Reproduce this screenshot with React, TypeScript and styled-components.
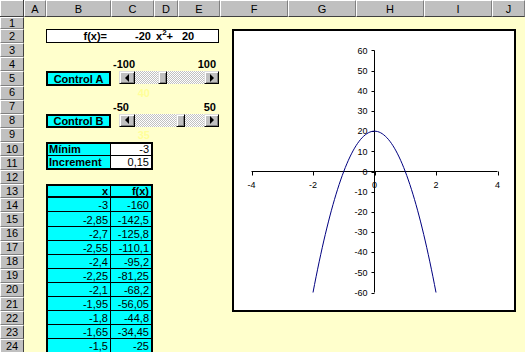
import { Fragment } from 'react'
import styled, { createGlobalStyle } from 'styled-components'

const GlobalStyle = createGlobalStyle`
  *, *::before, *::after { box-sizing: border-box; }
  html, body { margin: 0; padding: 0; background: #ffffcc; }
  body { font-family: "Liberation Sans", Arial, sans-serif; }
`

const COLS = ['A', 'B', 'C', 'D', 'E', 'F', 'G', 'H', 'I', 'J']
const COL_WIDTHS = [22, 65, 43, 24, 42, 68, 68, 68, 68, 33]
const ROW_COUNT = 24

const TABLE: [string, string][] = [
  ['-3', '-160'],
  ['-2,85', '-142,5'],
  ['-2,7', '-125,8'],
  ['-2,55', '-110,1'],
  ['-2,4', '-95,2'],
  ['-2,25', '-81,25'],
  ['-2,1', '-68,2'],
  ['-1,95', '-56,05'],
  ['-1,8', '-44,8'],
  ['-1,65', '-34,45'],
  ['-1,5', '-25'],
]

const Sheet = styled.div`
  display: grid;
  grid-template-columns: 24px ${COL_WIDTHS.map((w) => `${w}px`).join(' ')};
  grid-template-rows: 17px 12px 14.3px repeat(22, 14.1px);
  width: 525px;
  height: 352px;
  overflow: hidden;
  background: #ffffcc;
  font-family: "Liberation Sans", Arial, sans-serif;
  font-size: 11px;
  color: #000;
`

const Corner = styled.div`
  grid-column: 1;
  grid-row: 1;
  background: #c0c0c0;
  border-right: 1px solid #404040;
  border-bottom: 1px solid #404040;
  box-shadow: inset 1px 1px #fff;
`

const ColHead = styled.div<{ $col: number }>`
  grid-row: 1;
  grid-column: ${(p) => p.$col};
  display: flex;
  align-items: center;
  justify-content: center;
  background: #c0c0c0;
  border-left: 1px solid #fff;
  border-right: 1px solid #808080;
  border-bottom: 1px solid #404040;
  border-top: 1px solid #fff;
`

const RowHead = styled.div<{ $row: number }>`
  grid-column: 1;
  grid-row: ${(p) => p.$row};
  display: flex;
  align-items: center;
  justify-content: center;
  background: #c0c0c0;
  border-top: 1px solid #fff;
  border-left: 1px solid #fff;
  border-bottom: 1px solid #808080;
  border-right: 1px solid #404040;
  line-height: 1;
`

const FormulaBox = styled.div`
  grid-column: 3 / 7;
  grid-row: 3;
  display: flex;
  align-items: flex-end;
  background: #fff;
  border: 1px solid #000;
  margin-right: 1px;
  font-weight: 700;
  line-height: 12px;
`

const Part = styled.span<{ $w?: number; $align?: 'left' | 'right'; $pad: number }>`
  flex: ${(p) => (p.$w ? `0 0 ${p.$w}px` : '1')};
  text-align: ${(p) => p.$align ?? 'left'};
  padding-${(p) => p.$align ?? 'left'}: ${(p) => p.$pad}px;
  white-space: nowrap;

  sup {
    font-size: 8px;
    line-height: 0;
    vertical-align: 5px;
  }
`

const RangeLabels = styled.div<{ $row: number }>`
  grid-column: 4 / 7;
  grid-row: ${(p) => p.$row};
  display: flex;
  justify-content: space-between;
  align-items: flex-end;
  padding: 0 4px 1px 2px;
  font-weight: 700;
  line-height: 12px;
`

const ControlLabel = styled.div<{ $row: number }>`
  grid-column: 3;
  grid-row: ${(p) => p.$row};
  display: flex;
  align-items: center;
  justify-content: center;
  background: #00ffff;
  border: 2px solid #000;
  font-weight: 700;
`

const ScrollBar = styled.div<{ $row: number }>`
  grid-column: 4 / 7;
  grid-row: ${(p) => p.$row};
  align-self: start;
  display: flex;
  height: 13px;
  margin: 0 1px 0 8px;
`

const ArrowButton = styled.div<{ $w: number }>`
  flex: 0 0 ${(p) => p.$w}px;
  display: flex;
  align-items: center;
  justify-content: center;
  background: #c0c0c0;
  border-top: 1px solid #dfdfdf;
  border-left: 1px solid #dfdfdf;
  border-right: 1px solid #000;
  border-bottom: 1px solid #000;
  box-shadow: inset 1px 1px #fff, inset -1px -1px #808080;
`

const Arrow = styled.span<{ $dir: 'left' | 'right' }>`
  width: 0;
  height: 0;
  border-top: 4px solid transparent;
  border-bottom: 4px solid transparent;
  ${(p) => (p.$dir === 'left' ? 'border-right: 4px solid #000;' : 'border-left: 4px solid #000;')}
`

const Track = styled.div`
  flex: 1;
  display: flex;
  background: repeating-conic-gradient(#c0c0c0 0 25%, #fff 0 50%) 0 0 / 2px 2px;
`

const Thumb = styled.div<{ $offset: number }>`
  flex: 0 0 9px;
  margin-left: ${(p) => p.$offset}px;
  background: #c0c0c0;
  border-top: 1px solid #dfdfdf;
  border-left: 1px solid #dfdfdf;
  border-right: 1px solid #000;
  border-bottom: 1px solid #000;
  box-shadow: inset 1px 1px #fff, inset -1px -1px #808080;
`

const GhostValue = styled.div<{ $row: number }>`
  grid-column: 4;
  grid-row: ${(p) => p.$row};
  align-self: end;
  text-align: right;
  padding: 0 4px 1px 0;
  color: #ffff99;
  font-weight: 700;
  line-height: 12px;
`

const CellTable = styled.div<{ $rows: string; $open?: boolean }>`
  grid-column: 3 / 5;
  grid-row: ${(p) => p.$rows};
  display: grid;
  grid-template-columns: subgrid;
  grid-template-rows: subgrid;
  border: 2px solid #000;
  border-bottom-width: ${(p) => (p.$open ? 0 : 2)}px;
  margin-right: 1px;
`

const Cell = styled.div<{
  $fill?: string
  $bold?: boolean
  $align?: 'left' | 'right'
  $divider?: boolean
  $rule?: number
}>`
  display: flex;
  align-items: flex-end;
  justify-content: ${(p) => (p.$align === 'left' ? 'flex-start' : 'flex-end')};
  padding: 0 2px 0 1px;
  background: ${(p) => p.$fill ?? '#00ffff'};
  font-weight: ${(p) => (p.$bold ? 700 : 400)};
  border-right: ${(p) => (p.$divider ? '1px solid #000' : 'none')};
  border-bottom: ${(p) => p.$rule ?? 1}px solid #000;
  line-height: ${(p) => ((p.$rule ?? 1) > 1 ? 10 : 12)}px;
  white-space: nowrap;
`

const ChartFrame = styled.div`
  grid-column: 7 / 12;
  grid-row: 3 / 24;
  align-self: start;
  justify-self: start;
  width: 284px;
  height: 283px;
  margin-left: 12px;
  background: #fff;
  border: 2px solid #000;

  svg {
    display: block;
  }

  text {
    font-family: "Liberation Sans", Arial, sans-serif;
    font-size: 9px;
    fill: #000;
  }
`

// chart geometry, in svg coordinates of the frame's inside
const X0 = 140.5
const Y0 = 140.5
const XS = 30.75
const YS = 2.0167
const sx = (x: number) => X0 + x * XS
const sy = (y: number) => Y0 - y * YS

const curve = Array.from({ length: 81 }, (_, i) => {
  const x = -2 + i * 0.05
  return `${sx(x).toFixed(2)},${sy(-20 * x * x + 20).toFixed(2)}`
}).join(' ')

const Chart = () => (
  <ChartFrame>
    <svg width={280} height={279} viewBox="0 0 280 279">
      <line x1={sx(-4)} y1={Y0} x2={sx(4)} y2={Y0} stroke="#000" />
      <line x1={X0} y1={sy(60)} x2={X0} y2={sy(-60)} stroke="#000" />
      {[-4, -2, 0, 2, 4].map((v) => (
        <g key={`x${v}`}>
          <line x1={Math.round(sx(v)) + 0.5} y1={Y0} x2={Math.round(sx(v)) + 0.5} y2={Y0 + 4} stroke="#000" />
          <text x={sx(v)} y={157} textAnchor="middle">
            {v}
          </text>
        </g>
      ))}
      {[60, 50, 40, 30, 20, 10, 0, -10, -20, -30, -40, -50, -60].map((v) => (
        <g key={`y${v}`}>
          <line x1={X0 - 3} y1={Math.round(sy(v)) + 0.5} x2={X0} y2={Math.round(sy(v)) + 0.5} stroke="#000" />
          <text x={133.5} y={sy(v) + 3.3} textAnchor="end">
            {v}
          </text>
        </g>
      ))}
      <polyline points={curve} fill="none" stroke="#000080" strokeWidth={1} />
    </svg>
  </ChartFrame>
)

const App = () => (
  <>
    <GlobalStyle />
    <Sheet>
      <Corner />
      {COLS.map((c, i) => (
        <ColHead key={c} $col={i + 2}>
          {c}
        </ColHead>
      ))}
      {Array.from({ length: ROW_COUNT }, (_, i) => (
        <RowHead key={i} $row={i + 2}>
          {i + 1}
        </RowHead>
      ))}

      <FormulaBox>
        <Part $w={64} $align="right" $pad={4}>
          f(x)=
        </Part>
        <Part $w={43} $align="right" $pad={3}>
          -20
        </Part>
        <Part $w={24} $pad={2}>
          x<sup>2</sup>+
        </Part>
        <Part $pad={4}>20</Part>
      </FormulaBox>

      <RangeLabels $row={5}>
        <span>-100</span>
        <span>100</span>
      </RangeLabels>
      <ControlLabel $row={6}>Control A</ControlLabel>
      <ScrollBar $row={6}>
        <ArrowButton $w={16}>
          <Arrow $dir="left" />
        </ArrowButton>
        <Track>
          <Thumb $offset={23} />
        </Track>
        <ArrowButton $w={15}>
          <Arrow $dir="right" />
        </ArrowButton>
      </ScrollBar>
      <GhostValue $row={7}>40</GhostValue>

      <RangeLabels $row={8}>
        <span>-50</span>
        <span>50</span>
      </RangeLabels>
      <ControlLabel $row={9}>Control B</ControlLabel>
      <ScrollBar $row={9}>
        <ArrowButton $w={16}>
          <Arrow $dir="left" />
        </ArrowButton>
        <Track>
          <Thumb $offset={41} />
        </Track>
        <ArrowButton $w={15}>
          <Arrow $dir="right" />
        </ArrowButton>
      </ScrollBar>
      <GhostValue $row={10}>35</GhostValue>

      <CellTable $rows="11 / 13">
        <Cell $bold $align="left" $divider>
          Mínim
        </Cell>
        <Cell $fill="#fff">-3</Cell>
        <Cell $bold $align="left" $divider $rule={0}>
          Increment
        </Cell>
        <Cell $fill="#fff" $rule={0}>
          0,15
        </Cell>
      </CellTable>

      <CellTable $rows="14 / 26" $open>
        <Cell $bold $divider $rule={2}>
          x
        </Cell>
        <Cell $bold $rule={2}>
          f(x)
        </Cell>
        {TABLE.map(([x, y]) => (
          <Fragment key={x}>
            <Cell $divider>{x}</Cell>
            <Cell>{y}</Cell>
          </Fragment>
        ))}
      </CellTable>

      <Chart />
    </Sheet>
  </>
)

export default App
